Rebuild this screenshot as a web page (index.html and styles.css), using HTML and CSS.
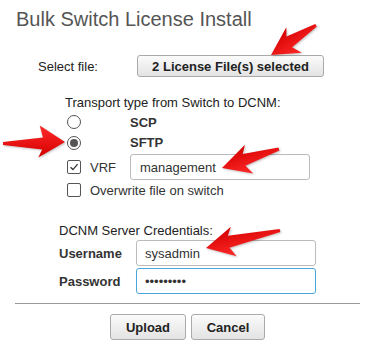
FILE: index.html
```html
<!DOCTYPE html>
<html lang="en">
<head>
    <meta charset="UTF-8">
    <title>Bulk Switch License Install</title>
    <link rel="stylesheet" href="styles.css">
</head>
<body>
    <div class="dialog">
        <h1 class="title">Bulk Switch License Install</h1>
        <div class="file-row">
            <span class="file-label">Select file:</span>
            <button class="btn file-btn">2 License File(s) selected</button>
        </div>
        <div class="transport">
            <div class="section-label">Transport type from Switch to DCNM:</div>
            <div class="options">
                <span class="radio"></span>
                <span class="opt-bold">SCP</span>
                <span class="radio checked"></span>
                <span class="opt-bold">SFTP</span>
                <span class="check">
                    <svg viewBox="0 0 14 14"><path d="M3 7.2l2.8 2.8 5.4-6.4" fill="none" stroke="#333" stroke-width="1.5"/></svg>
                </span>
                <span class="opt">VRF</span>
                <input class="field vrf-field" type="text" value="management">
                <span class="check"></span>
                <span class="opt opt-wide">Overwrite file on switch</span>
            </div>
        </div>
        <div class="creds">
            <div class="section-label">DCNM Server Credentials:</div>
            <div class="cred-row">
                <label class="cred-label">Username</label>
                <input class="field" type="text" value="sysadmin">
            </div>
            <div class="cred-row">
                <label class="cred-label">Password</label>
                <input class="field focused" type="password" value="123456789">
            </div>
        </div>
        <hr class="divider">
        <div class="actions">
            <button class="btn action-btn">Upload</button>
            <button class="btn action-btn">Cancel</button>
        </div>

        <!-- annotation arrows -->
        <svg class="arrows" viewBox="0 0 368 357">
            <defs>
                <linearGradient id="red" x1="0" y1="0" x2="0" y2="1">
                    <stop offset="0" stop-color="#ff2b2b"/>
                    <stop offset="1" stop-color="#d40000"/>
                </linearGradient>
            </defs>
            <g transform="translate(271 55) rotate(147)">
                <polygon points="0,0 -27,-15 -22,-5 -54,-1 -54,2 -23,7 -28,15" fill="url(#red)"/>
            </g>
            <g transform="translate(65 142) rotate(-1)">
                <polygon points="0,0 -25,-17 -22,-5 -62,-1 -62,2 -23,7 -27,15" fill="url(#red)"/>
            </g>
            <g transform="translate(222 168) rotate(162)">
                <polygon points="0,0 -28,-15 -23,-5 -60,-1 -60,2 -24,7 -29,15" fill="url(#red)"/>
            </g>
            <g transform="translate(206 248) rotate(167)">
                <polygon points="0,0 -28,-15 -23,-5 -76,-1 -76,2 -24,7 -29,15" fill="url(#red)"/>
            </g>
        </svg>
    </div>
</body>
</html>
```

FILE: styles.css
```css
body {
    margin: 0;
    background: #fff;
    font-family: 'Liberation Sans', Arial, sans-serif;
    font-size: 13px;
    color: #222;
}
.dialog {
    position: relative;
    width: 368px;
    height: 357px;
    overflow: hidden;
}
.title {
    margin: 8px 0 0 16px;
    font-size: 20px;
    line-height: 23px;
    font-weight: normal;
    color: #555;
}
.file-row {
    display: flex;
    align-items: center;
    margin-top: 24px;
    padding-left: 38px;
}
.file-label {
    width: 99px;
}
.btn {
    font-family: 'Liberation Sans', Arial, sans-serif;
    font-size: 13px;
    font-weight: 700;
    color: #222;
    background: linear-gradient(#fbfbfb, #e3e3e3);
    border: 1px solid #aaa;
    border-radius: 3px;
    padding: 0;
    box-sizing: border-box;
}
.file-btn {
    width: 187px;
    height: 22px;
}
.transport {
    margin: 18px 0 0 65px;
}
.section-label {
    line-height: 16px;
}
.options {
    display: grid;
    grid-template-columns: 23px 40px 180px;
    grid-template-rows: 20px 21px 28px 18px;
    align-items: center;
    margin: 1px 0 0 2px;
}
.radio {
    grid-column: 1;
    width: 14px;
    height: 14px;
    border: 1px solid #555;
    border-radius: 50%;
    box-sizing: border-box;
    display: flex;
    align-items: center;
    justify-content: center;
}
.radio.checked::after {
    content: "";
    width: 8px;
    height: 8px;
    border-radius: 50%;
    background: #555;
}
.opt-bold {
    grid-column: 3;
    font-weight: 700;
    color: #333;
}
.check {
    grid-column: 1;
    width: 14px;
    height: 14px;
    border: 1px solid #555;
    border-radius: 2px;
    box-sizing: border-box;
}
.check svg {
    display: block;
    width: 12px;
    height: 12px;
}
.opt {
    grid-column: 2;
    color: #333;
}
.opt-wide {
    grid-column: 2 / span 2;
}
.field {
    width: 180px;
    height: 26px;
    box-sizing: border-box;
    border: 1px solid #bbb;
    border-radius: 3px;
    padding: 0 8px;
    font-family: 'Liberation Sans', Arial, sans-serif;
    font-size: 13px;
    color: #333;
    background: #fff;
}
.vrf-field {
    grid-column: 3;
    padding-left: 9px;
}
.field.focused {
    border-color: #4aa6de;
    outline: none;
}
.creds {
    margin: 24px 0 0 59px;
}
.cred-row {
    display: flex;
    align-items: center;
    margin-top: 2px;
}
.section-label + .cred-row {
    margin-top: 1px;
}
.cred-label {
    width: 77px;
    font-weight: 700;
    color: #333;
}
.divider {
    margin: 9px 8px 0 15px;
    border: none;
    border-top: 1px solid #999;
    height: 0;
}
.actions {
    display: flex;
    justify-content: center;
    gap: 5px;
    margin: 10px 8px 0 15px;
}
.action-btn {
    height: 26px;
    width: 76px;
}
.action-btn + .action-btn {
    width: 74px;
}
.arrows {
    position: absolute;
    left: 0;
    top: 0;
    width: 368px;
    height: 357px;
    pointer-events: none;
    filter: drop-shadow(1px 1px 1px rgba(0, 0, 0, 0.25));
}
```
